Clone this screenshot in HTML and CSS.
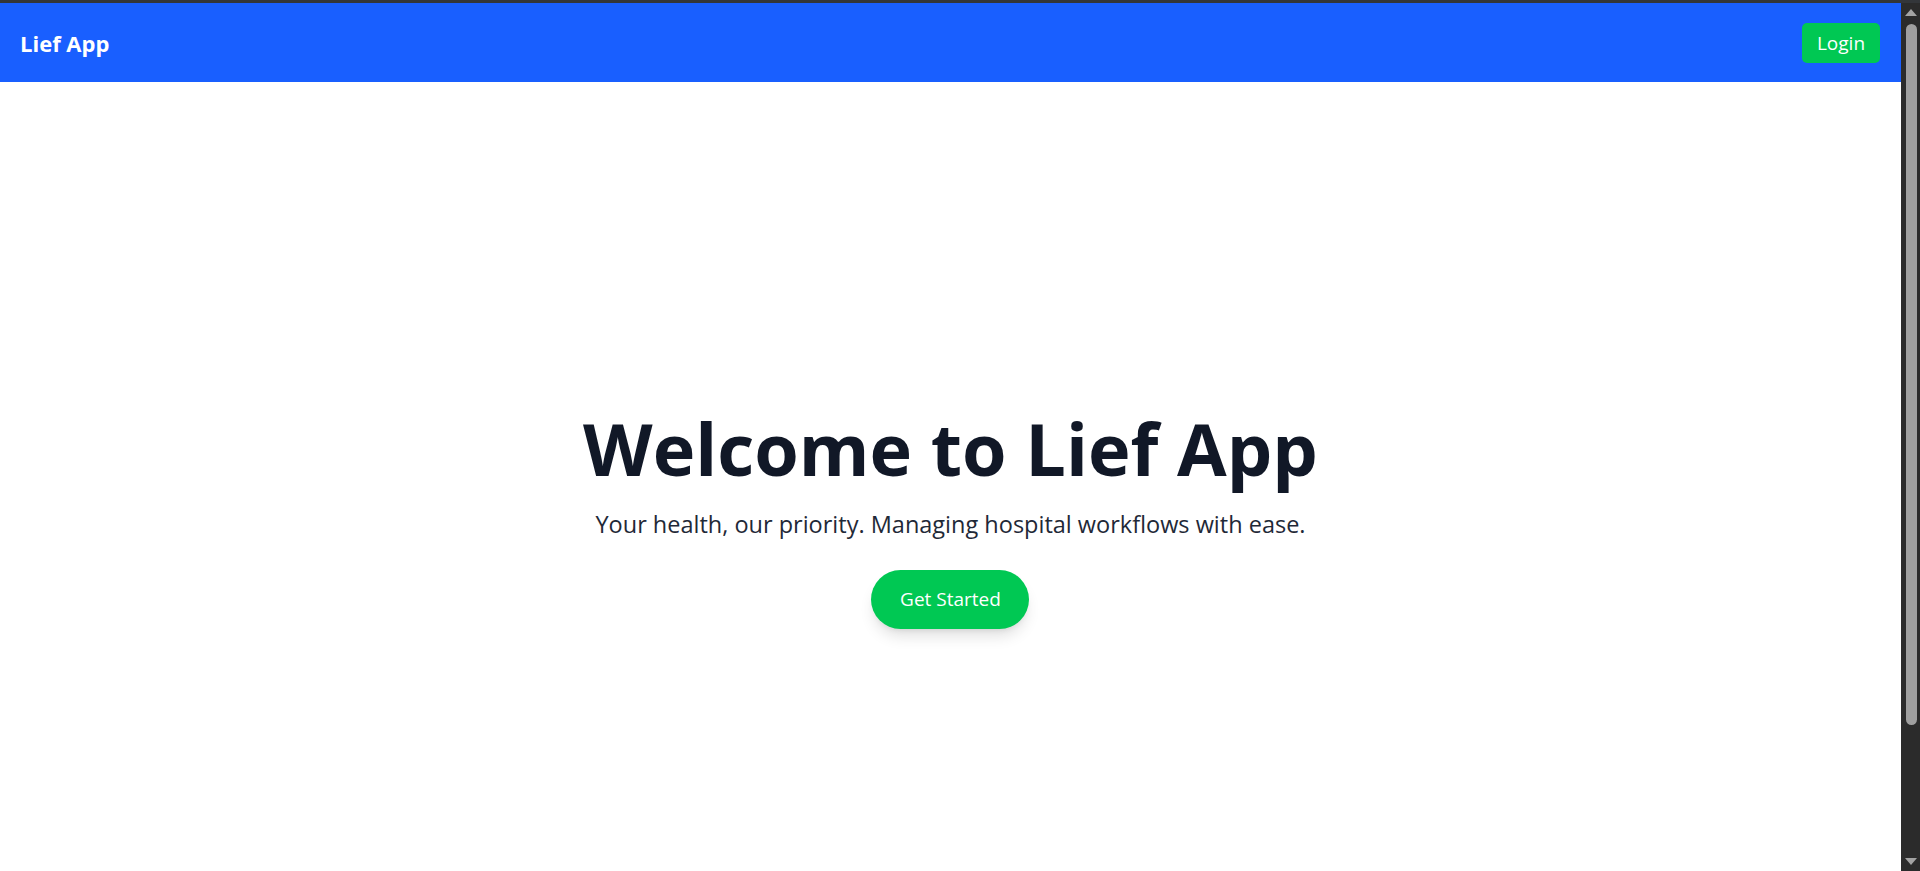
FILE: index.html
```html
<!DOCTYPE html>
<html lang="en">
<head>
<meta charset="utf-8">
<title>Lief App</title>
<link rel="stylesheet" href="styles.css">
</head>
<body>
<div class="frame">
  <div class="window-edge"></div>
  <div class="window">
    <div class="page">
      <nav class="navbar">
        <span class="brand">Lief App</span>
        <button class="login-btn">Login</button>
      </nav>
      <main class="hero">
        <div class="hero-content">
          <h1 class="hero-title">Welcome to Lief App</h1>
          <p class="hero-subtitle">Your health, our priority. Managing hospital workflows with ease.</p>
          <button class="cta-btn">Get Started</button>
        </div>
      </main>
    </div>
    <div class="scrollbar" aria-hidden="true">
      <div class="arrow-up"></div>
      <div class="thumb"></div>
      <div class="track-rest"></div>
      <div class="arrow-down"></div>
    </div>
  </div>
</div>
</body>
</html>
```

FILE: styles.css
```css
* {
  box-sizing: border-box;
}

html, body {
  margin: 0;
  padding: 0;
  height: 100%;
}

body {
  font-family: "Open Sans", "Noto Sans", sans-serif;
  background: #ffffff;
  overflow: hidden;
}

.frame {
  display: flex;
  flex-direction: column;
  height: 100vh;
}

.window-edge {
  height: 3px;
  flex: none;
  background: #33363a;
}

.window {
  flex: 1;
  display: flex;
  min-height: 0;
}

.page {
  flex: 1;
  display: flex;
  flex-direction: column;
  overflow: hidden;
  background: #ffffff;
}

.navbar {
  flex: none;
  height: 79px;
  background: #195fff;
  display: flex;
  align-items: center;
  justify-content: space-between;
  padding: 0 21px 0 20px;
}

.brand {
  color: #ffffff;
  font-weight: 700;
  font-size: 22px;
}

.login-btn {
  font-family: inherit;
  border: none;
  background: #00c853;
  color: #ffffff;
  font-size: 19px;
  height: 40px;
  width: 78px;
  border-radius: 5px;
  padding: 0;
  display: flex;
  align-items: center;
  justify-content: center;
}

.hero {
  flex: none;
  min-height: 877px;
  display: flex;
  align-items: center;
  justify-content: center;
}

.hero-content {
  display: flex;
  flex-direction: column;
  align-items: center;
}

.hero-title {
  margin: 0;
  font-size: 72px;
  line-height: 1;
  font-weight: 700;
  color: #111827;
}

.hero-subtitle {
  margin: 24px 0 0;
  font-size: 23.5px;
  line-height: 33px;
  color: #1f2937;
}

.cta-btn {
  margin-top: 29px;
  font-family: inherit;
  border: none;
  background: #00c853;
  color: #ffffff;
  font-size: 19px;
  line-height: 27px;
  height: 59px;
  width: 158px;
  border-radius: 9999px;
  box-shadow: 0 10px 15px -3px rgba(0, 0, 0, 0.12), 0 4px 6px -4px rgba(0, 0, 0, 0.12);
}

.scrollbar {
  flex: none;
  width: 19px;
  background: #2b2b2b;
  display: flex;
  flex-direction: column;
  align-items: center;
  padding: 6px 0 6px;
}

.arrow-up {
  width: 0;
  height: 0;
  border-left: 6px solid transparent;
  border-right: 6px solid transparent;
  border-bottom: 7px solid #a3a3a3;
  margin-left: 1px;
}

.thumb {
  margin-top: 8px;
  width: 11px;
  height: 701px;
  border-radius: 6px;
  background: #9f9f9f;
  margin-left: 1px;
}

.track-rest {
  flex: 1;
}

.arrow-down {
  width: 0;
  height: 0;
  border-left: 6px solid transparent;
  border-right: 6px solid transparent;
  border-top: 7px solid #a3a3a3;
  margin-left: 1px;
}
```
